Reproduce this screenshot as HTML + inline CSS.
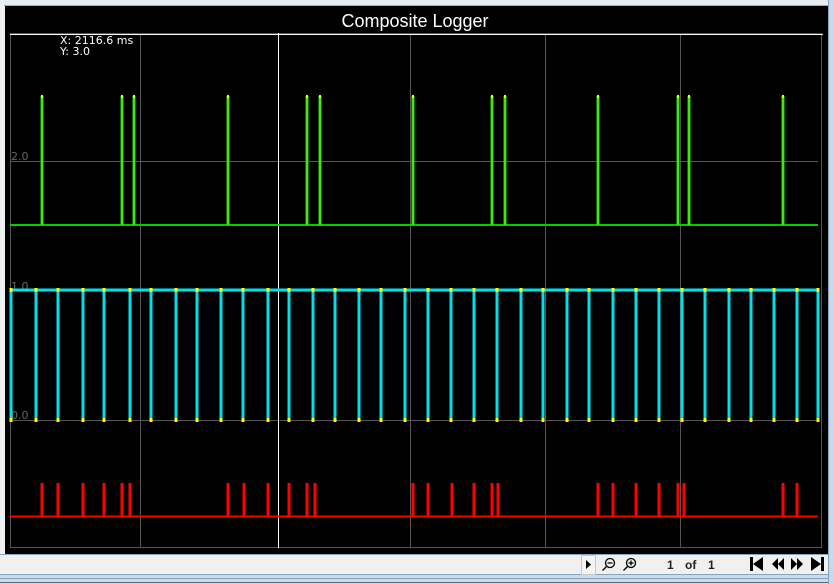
<!DOCTYPE html>
<html><head><meta charset="utf-8"><style>
html,body{margin:0;padding:0;width:834px;height:584px;overflow:hidden;background:#eef0f2;font-family:"Liberation Sans",sans-serif}
</style></head><body>
<svg width="834" height="584" xmlns="http://www.w3.org/2000/svg" style="position:absolute;left:0;top:0">
<rect x="0" y="0" width="834" height="584" fill="#eef0f2"/>
<rect x="0" y="0" width="834" height="5" fill="#e6ebf0"/>
<line x1="0" y1="5.5" x2="828" y2="5.5" stroke="#9aa8b8"/>
<rect x="828" y="0" width="6" height="584" fill="#c8d8ea"/>
<line x1="828.5" y1="0" x2="828.5" y2="584" stroke="#8aa0b8"/>
<rect x="0" y="0" width="4" height="554" fill="#eef0f2"/>
<rect x="5" y="6" width="823" height="548" fill="#000"/>
<text x="415" y="27" fill="#fff" font-size="18" text-anchor="middle" font-family="Liberation Sans,sans-serif">Composite Logger</text>
<g stroke="#555" stroke-width="1" fill="none">
<rect x="10.5" y="33.5" width="811" height="514"/>
<line x1="140.5" y1="33" x2="140.5" y2="548"/>
<line x1="410.5" y1="33" x2="410.5" y2="548"/>
<line x1="545.5" y1="33" x2="545.5" y2="548"/>
<line x1="680.5" y1="33" x2="680.5" y2="548"/>
<line x1="10" y1="161.5" x2="818" y2="161.5"/>
<line x1="10" y1="290.5" x2="818" y2="290.5"/>
<line x1="10" y1="420.5" x2="818" y2="420.5"/>
</g>
<line x1="10" y1="34.5" x2="823" y2="34.5" stroke="#fff"/>
<line x1="278.5" y1="33" x2="278.5" y2="548" stroke="#fff"/>
<g fill="#666" font-size="11" font-family="DejaVu Sans,sans-serif">
<text x="11" y="160">2.0</text><text x="11" y="290">1.0</text><text x="11" y="419">0.0</text>
</g>
<g fill="#fff" font-size="11" font-family="DejaVu Sans,sans-serif">
<text x="60" y="44">X: 2116.6 ms</text><text x="60" y="55">Y: 3.0</text>
</g>
<line x1="10" y1="225" x2="818" y2="225" stroke="#00d000" stroke-width="2"/>
<g stroke="#22cc00" stroke-width="3">
<path d="M42 96V225M122 96V225M134 96V225M228 96V225M307 96V225M320 96V225M413 96V225M492 96V225M505 96V225M598 96V225M678 96V225M689 96V225M783 96V225"/>
</g>
<g stroke="#66ff22" stroke-width="1">
<path d="M42 96V225M122 96V225M134 96V225M228 96V225M307 96V225M320 96V225M413 96V225M492 96V225M505 96V225M598 96V225M678 96V225M689 96V225M783 96V225"/>
</g>
<g fill="#ff0">
<rect x="41" y="95" width="2" height="3"/><rect x="121" y="95" width="2" height="3"/><rect x="133" y="95" width="2" height="3"/><rect x="227" y="95" width="2" height="3"/><rect x="306" y="95" width="2" height="3"/><rect x="319" y="95" width="2" height="3"/><rect x="412" y="95" width="2" height="3"/><rect x="491" y="95" width="2" height="3"/><rect x="504" y="95" width="2" height="3"/><rect x="597" y="95" width="2" height="3"/><rect x="677" y="95" width="2" height="3"/><rect x="688" y="95" width="2" height="3"/><rect x="782" y="95" width="2" height="3"/>
</g>
<line x1="10" y1="290" x2="818" y2="290" stroke="#00e0e8" stroke-width="3"/>
<g stroke="#00e0e8" stroke-width="3">
<path d="M11 290V420M36 290V420M58 290V420M83 290V420M104 290V420M130 290V420M151 290V420M176 290V420M197 290V420M221 290V420M243 290V420M268 290V420M289 290V420M313 290V420M335 290V420M359 290V420M381 290V420M405 290V420M428 290V420M451 290V420M474 290V420M497 290V420M521 290V420M543 290V420M567 290V420M589 290V420M613 290V420M636 290V420M659 290V420M682 290V420M705 290V420M729 290V420M751 290V420M774 290V420M797 290V420M818 290V420"/>
</g>
<g stroke="#ff0" stroke-width="3">
<path d="M11 288v4M36 288v4M58 288v4M83 288v4M104 288v4M130 288v4M151 288v4M176 288v4M197 288v4M221 288v4M243 288v4M268 288v4M289 288v4M313 288v4M335 288v4M359 288v4M381 288v4M405 288v4M428 288v4M451 288v4M474 288v4M497 288v4M521 288v4M543 288v4M567 288v4M589 288v4M613 288v4M636 288v4M659 288v4M682 288v4M705 288v4M729 288v4M751 288v4M774 288v4M797 288v4M818 288v4"/>
<path d="M11 418v4M36 418v4M58 418v4M83 418v4M104 418v4M130 418v4M151 418v4M176 418v4M197 418v4M221 418v4M243 418v4M268 418v4M289 418v4M313 418v4M335 418v4M359 418v4M381 418v4M405 418v4M428 418v4M451 418v4M474 418v4M497 418v4M521 418v4M543 418v4M567 418v4M589 418v4M613 418v4M636 418v4M659 418v4M682 418v4M705 418v4M729 418v4M751 418v4M774 418v4M797 418v4M818 418v4"/>
</g>
<line x1="10" y1="516.5" x2="818" y2="516.5" stroke="#f00" stroke-width="2"/>
<g stroke="#f00" stroke-width="3">
<path d="M42 483V516M58 483V516M83 483V516M104 483V516M122 483V516M130 483V516M228 483V516M244 483V516M268 483V516M289 483V516M307 483V516M315 483V516M413 483V516M428 483V516M452 483V516M474 483V516M492 483V516M498 483V516M598 483V516M613 483V516M636 483V516M659 483V516M678 483V516M684 483V516M783 483V516M797 483V516"/>
</g>
<rect x="0" y="554" width="828" height="20" fill="#f0f0f0"/>
<line x1="0" y1="554.5" x2="828" y2="554.5" stroke="#8aa4bc"/>
<rect x="0" y="574" width="828" height="10" fill="#c8daee"/>
<line x1="0" y1="574.5" x2="828" y2="574.5" stroke="#8aa4bc"/>
<line x1="0" y1="578.5" x2="828" y2="578.5" stroke="#8aa4bc"/>
<line x1="0" y1="582.5" x2="828" y2="582.5" stroke="#666"/>
<rect x="581.5" y="555.5" width="14" height="19" fill="#f4f4f4" stroke="#c8c8c8"/>
<path d="M586 560l5 4.5-5 4.5z" fill="#000"/>
<g stroke="#000" stroke-width="1.3" fill="none">
<circle cx="610" cy="563" r="4.5"/><path d="M606.5 566.5l-4 4M607.5 563h5"/>
<circle cx="631" cy="563" r="4.5"/><path d="M627.5 566.5l-4 4M628.5 563h5M631 560.5v5"/>
</g>
<text x="667" y="569" font-size="12" font-weight="bold" fill="#222" font-family="Liberation Sans,sans-serif">1</text>
<text x="685" y="569" font-size="12" font-weight="bold" fill="#222" font-family="Liberation Sans,sans-serif">of</text>
<text x="708" y="569" font-size="12" font-weight="bold" fill="#222" font-family="Liberation Sans,sans-serif">1</text>
<g fill="#000">
<rect x="750" y="557" width="3" height="14"/><path d="M763 557v14l-10-7z"/>
<path d="M778 558v12l-6-6zM784 558v12l-6-6z"/>
<path d="M791 558v12l6-6zM797 558v12l6-6z"/>
<path d="M811 557v14l10-7z"/><rect x="821" y="557" width="3" height="14"/>
</g>
</svg>
</body></html>
